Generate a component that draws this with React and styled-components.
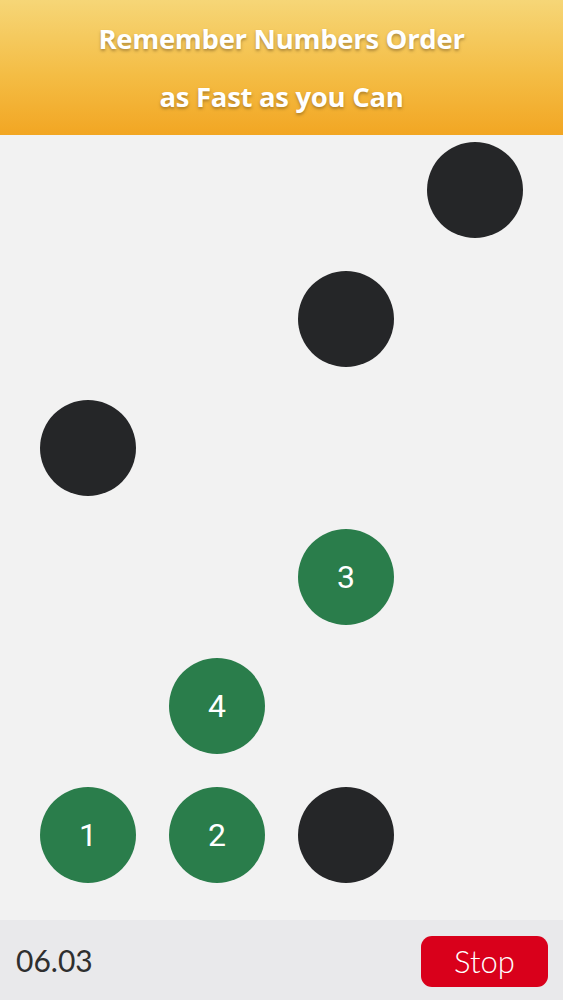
import React from 'react';
import styled, { createGlobalStyle } from 'styled-components';

const GlobalStyle = createGlobalStyle`
  html, body {
    margin: 0;
    padding: 0;
    background: #f2f2f2;
  }
  * {
    box-sizing: border-box;
  }
`;

const dots = [
  { row: 1, col: 4, dark: true },
  { row: 2, col: 3, dark: true },
  { row: 3, col: 1, dark: true },
  { row: 4, col: 3, label: '3' },
  { row: 5, col: 2, label: '4' },
  { row: 6, col: 1, label: '1' },
  { row: 6, col: 2, label: '2' },
  { row: 6, col: 3, dark: true },
];

function App() {
  return (
    <>
      <GlobalStyle />
      <StyledPage>
        <StyledHeader>
          <StyledHeaderLine>Remember Numbers Order</StyledHeaderLine>
          <StyledHeaderLine>as Fast as you Can</StyledHeaderLine>
        </StyledHeader>
        <StyledBoard>
          {dots.map((d, i) => (
            <StyledDot key={i} $row={d.row} $col={d.col} $dark={d.dark}>
              {d.label}
            </StyledDot>
          ))}
        </StyledBoard>
        <StyledFooter>
          <StyledTimer>06.03</StyledTimer>
          <StyledStopButton>Stop</StyledStopButton>
        </StyledFooter>
      </StyledPage>
    </>
  );
}

export const StyledPage = styled.div`
  display: flex;
  flex-direction: column;
  width: 563px;
  height: 1000px;
  background: #f2f2f2;
`;

// 상단 안내 문구
export const StyledHeader = styled.div`
  height: 135px;
  display: flex;
  flex-direction: column;
  align-items: center;
  justify-content: center;
  background: linear-gradient(to bottom, #f6d677 0%, #f4bd45 55%, #f2a623 100%);
  font-family: 'Open Sans', 'Noto Sans', sans-serif;
  font-weight: 700;
  font-size: 27.5px;
  color: #ffffff;
  text-shadow: 0 2px 3px rgba(110, 80, 30, 0.5);
`;

export const StyledHeaderLine = styled.div`
  height: 58px;
  line-height: 58px;
  letter-spacing: -0.3px;
`;

// 숫자 판
export const StyledBoard = styled.div`
  flex: 1;
  display: grid;
  grid-template-columns: repeat(4, 96px);
  grid-template-rows: repeat(6, 96px);
  gap: 33px;
  padding: 7px 40px 0;
  align-content: start;
`;

export const StyledDot = styled.div`
  grid-row: ${(p) => p.$row};
  grid-column: ${(p) => p.$col};
  width: 96px;
  height: 96px;
  border-radius: 50%;
  display: flex;
  align-items: center;
  justify-content: center;
  background: ${(p) => (p.$dark ? '#252628' : '#2a7d4b')};
  color: #ffffff;
  font-family: 'Roboto', 'Noto Sans', sans-serif;
  font-weight: 400;
  font-size: 32px;
`;

// 하단 타이머, 버튼
export const StyledFooter = styled.div`
  height: 80px;
  display: flex;
  align-items: center;
  justify-content: space-between;
  padding: 0 15px 0 16px;
  background: #e9e9eb;
`;

export const StyledTimer = styled.div`
  font-family: 'Lato', 'Noto Sans', sans-serif;
  font-size: 30px;
  color: #2f2f2f;
`;

export const StyledStopButton = styled.button`
  width: 127px;
  height: 51px;
  margin-top: 2px;
  border: none;
  border-radius: 11px;
  background: #d9001b;
  color: #ffffff;
  font-family: 'Lato', 'Noto Sans', sans-serif;
  font-weight: 300;
  font-size: 31px;
`;

export default App;
